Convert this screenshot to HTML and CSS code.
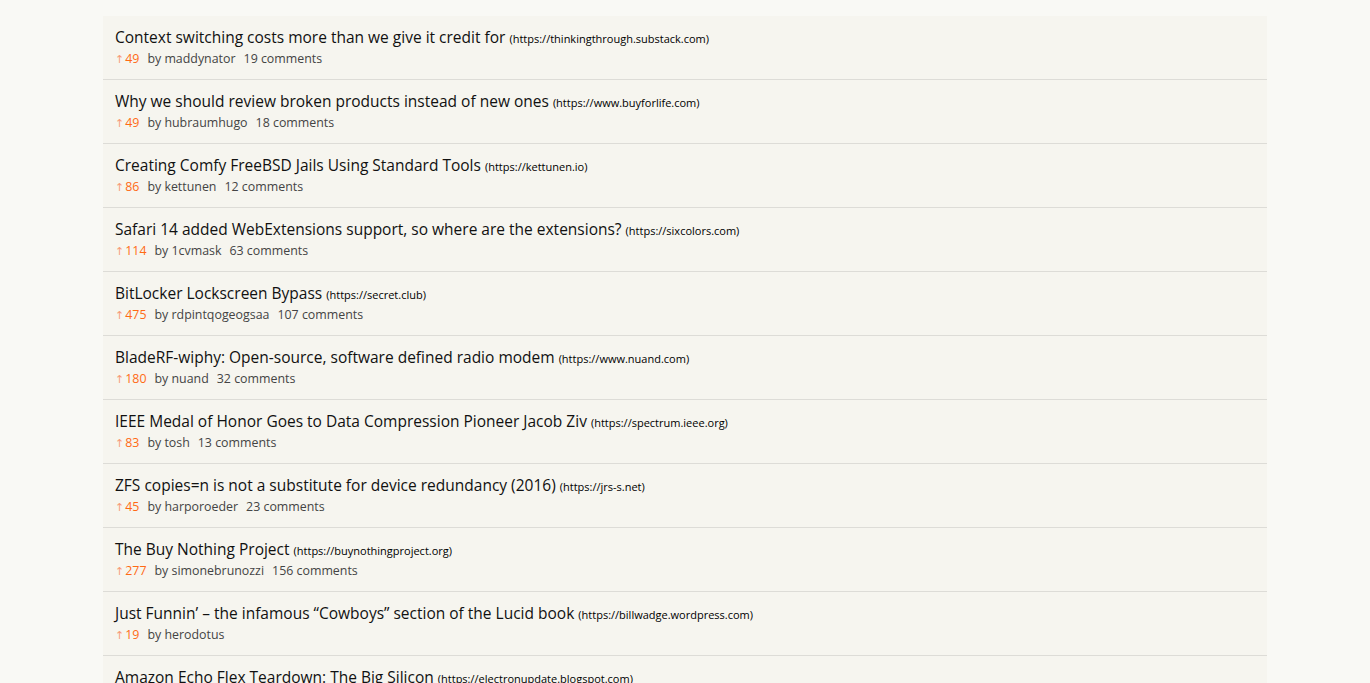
FILE: index.html
```html
<!DOCTYPE html>
<html>
<head>
<meta charset="utf-8">
<link rel="stylesheet" href="styles.css">
</head>
<body>
<ul class="list">
  <li class="item"><div class="title">Context switching costs more than we give it credit for <span class="domain">(https://thinkingthrough.substack.com)</span></div><div class="meta"><span class="score"><span class="arrow">↑</span>49</span><span class="by">by maddynator</span><span class="comments">19 comments</span></div></li>
  <li class="item"><div class="title">Why we should review broken products instead of new ones <span class="domain">(https://www.buyforlife.com)</span></div><div class="meta"><span class="score"><span class="arrow">↑</span>49</span><span class="by">by hubraumhugo</span><span class="comments">18 comments</span></div></li>
  <li class="item"><div class="title">Creating Comfy FreeBSD Jails Using Standard Tools <span class="domain">(https://kettunen.io)</span></div><div class="meta"><span class="score"><span class="arrow">↑</span>86</span><span class="by">by kettunen</span><span class="comments">12 comments</span></div></li>
  <li class="item"><div class="title">Safari 14 added WebExtensions support, so where are the extensions? <span class="domain">(https://sixcolors.com)</span></div><div class="meta"><span class="score"><span class="arrow">↑</span>114</span><span class="by">by 1cvmask</span><span class="comments">63 comments</span></div></li>
  <li class="item"><div class="title">BitLocker Lockscreen Bypass <span class="domain">(https://secret.club)</span></div><div class="meta"><span class="score"><span class="arrow">↑</span>475</span><span class="by">by rdpintqogeogsaa</span><span class="comments">107 comments</span></div></li>
  <li class="item"><div class="title">BladeRF-wiphy: Open-source, software defined radio modem <span class="domain">(https://www.nuand.com)</span></div><div class="meta"><span class="score"><span class="arrow">↑</span>180</span><span class="by">by nuand</span><span class="comments">32 comments</span></div></li>
  <li class="item"><div class="title">IEEE Medal of Honor Goes to Data Compression Pioneer Jacob Ziv <span class="domain">(https://spectrum.ieee.org)</span></div><div class="meta"><span class="score"><span class="arrow">↑</span>83</span><span class="by">by tosh</span><span class="comments">13 comments</span></div></li>
  <li class="item"><div class="title">ZFS copies=n is not a substitute for device redundancy (2016) <span class="domain">(https://jrs-s.net)</span></div><div class="meta"><span class="score"><span class="arrow">↑</span>45</span><span class="by">by harporoeder</span><span class="comments">23 comments</span></div></li>
  <li class="item"><div class="title">The Buy Nothing Project <span class="domain">(https://buynothingproject.org)</span></div><div class="meta"><span class="score"><span class="arrow">↑</span>277</span><span class="by">by simonebrunozzi</span><span class="comments">156 comments</span></div></li>
  <li class="item"><div class="title">Just Funnin’ – the infamous “Cowboys” section of the Lucid book <span class="domain">(https://billwadge.wordpress.com)</span></div><div class="meta"><span class="score"><span class="arrow">↑</span>19</span><span class="by">by herodotus</span></div></li>
  <li class="item"><div class="title">Amazon Echo Flex Teardown: The Big Silicon <span class="domain">(https://electronupdate.blogspot.com)</span></div><div class="meta"><span class="score"><span class="arrow">↑</span>60</span><span class="by">by tosh</span><span class="comments">20 comments</span></div></li>
</ul>
</body>
</html>
```
FILE: styles.css
```css
html, body {
  margin: 0;
  padding: 0;
  background: #f9f9f5;
  font-family: "Open Sans", "Noto Sans", sans-serif;
}
.list {
  list-style: none;
  margin: 16px auto 0;
  padding: 0;
  width: 1164px;
}
.item {
  background: #f6f5ef;
  border-bottom: 1px solid #dddcd7;
  height: 63px;
  padding: 0 12px;
  display: flex;
  flex-direction: column;
}
.title {
  margin-top: 11px;
  font-size: 15.5px;
  line-height: 20px;
  color: #111;
}
.domain {
  font-size: 11px;
  color: #000;
  font-weight: 500;
}
.meta {
  margin-top: 0;
  font-size: 12.4px;
  line-height: 20px;
  color: #444;
  display: flex;
  gap: 8px;
}
.score {
  color: #ff6a14;
}
.arrow {
  color: #f79c7a;
  font-family: "DejaVu Sans", sans-serif;
  font-size: 11px;
  margin-right: 1px;
}
```
